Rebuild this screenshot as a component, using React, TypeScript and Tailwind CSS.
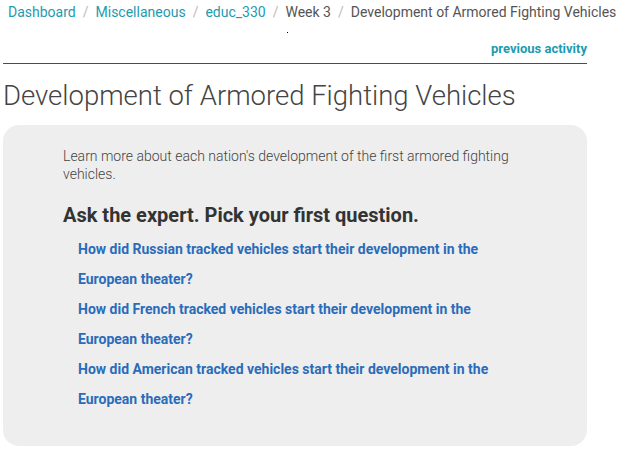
import React from 'react';

const crumbs = [
  { label: 'Dashboard', link: true },
  { label: 'Miscellaneous', link: true },
  { label: 'educ_330', link: true },
  { label: 'Week 3', link: false },
  { label: 'Development of Armored Fighting Vehicles', link: false },
];

const questions = ['Russian', 'French', 'American'];

export default function App() {
  return (
    <div className="w-[623px] h-[458px] bg-white overflow-hidden font-['Roboto',sans-serif] text-[#444]">
      {/* Breadcrumb */}
      <nav className="flex items-center pl-[8px] pt-[2px] h-[22px] text-[14px] whitespace-nowrap">
        {crumbs.map((c, i) => (
          <span key={c.label} className="flex items-center">
            {i > 0 && <span className="mx-[7px] text-[#bbb]">/</span>}
            <span className={c.link ? 'text-[#1c9bb0]' : 'text-[#555]'}>{c.label}</span>
          </span>
        ))}
      </nav>
      <div className="h-[9px] flex">
        <span className="ml-[287px] mt-[10px] w-[1px] h-[1px] bg-black" />
      </div>

      <div className="w-[584px] ml-[3px]">
        <div className="flex justify-end h-[33px] items-end pb-[5px] border-b border-[#a3214c]">
          <a className="text-[13px] font-bold text-[#1c9bb0]">previous activity</a>
        </div>
      </div>

      <h1 className="ml-[3px] mt-[15px] text-[27.5px] leading-[34px] font-light text-[#444]">
        Development of Armored Fighting Vehicles
      </h1>

      <div className="ml-[3px] mt-[12px] w-[584px] bg-[#eeeeee] rounded-[16px] pl-[60px] pr-[60px] pt-[22px] pb-[32px]">
        <p className="text-[14px] leading-[18px] font-light text-[#444]">
          Learn more about each nation's development of the first armored fighting vehicles.
        </p>
        <h2 className="mt-[20px] text-[20px] leading-[24px] font-bold text-[#333]">
          Ask the expert. Pick your first question.
        </h2>
        <ul className="mt-[7px] pl-[15px]">
          {questions.map((q) => (
            <li key={q} className="text-[14px] leading-[30px] font-bold text-[#2a6cb9]">
              How did {q} tracked vehicles start their development in the European theater?
            </li>
          ))}
        </ul>
      </div>
    </div>
  );
}
